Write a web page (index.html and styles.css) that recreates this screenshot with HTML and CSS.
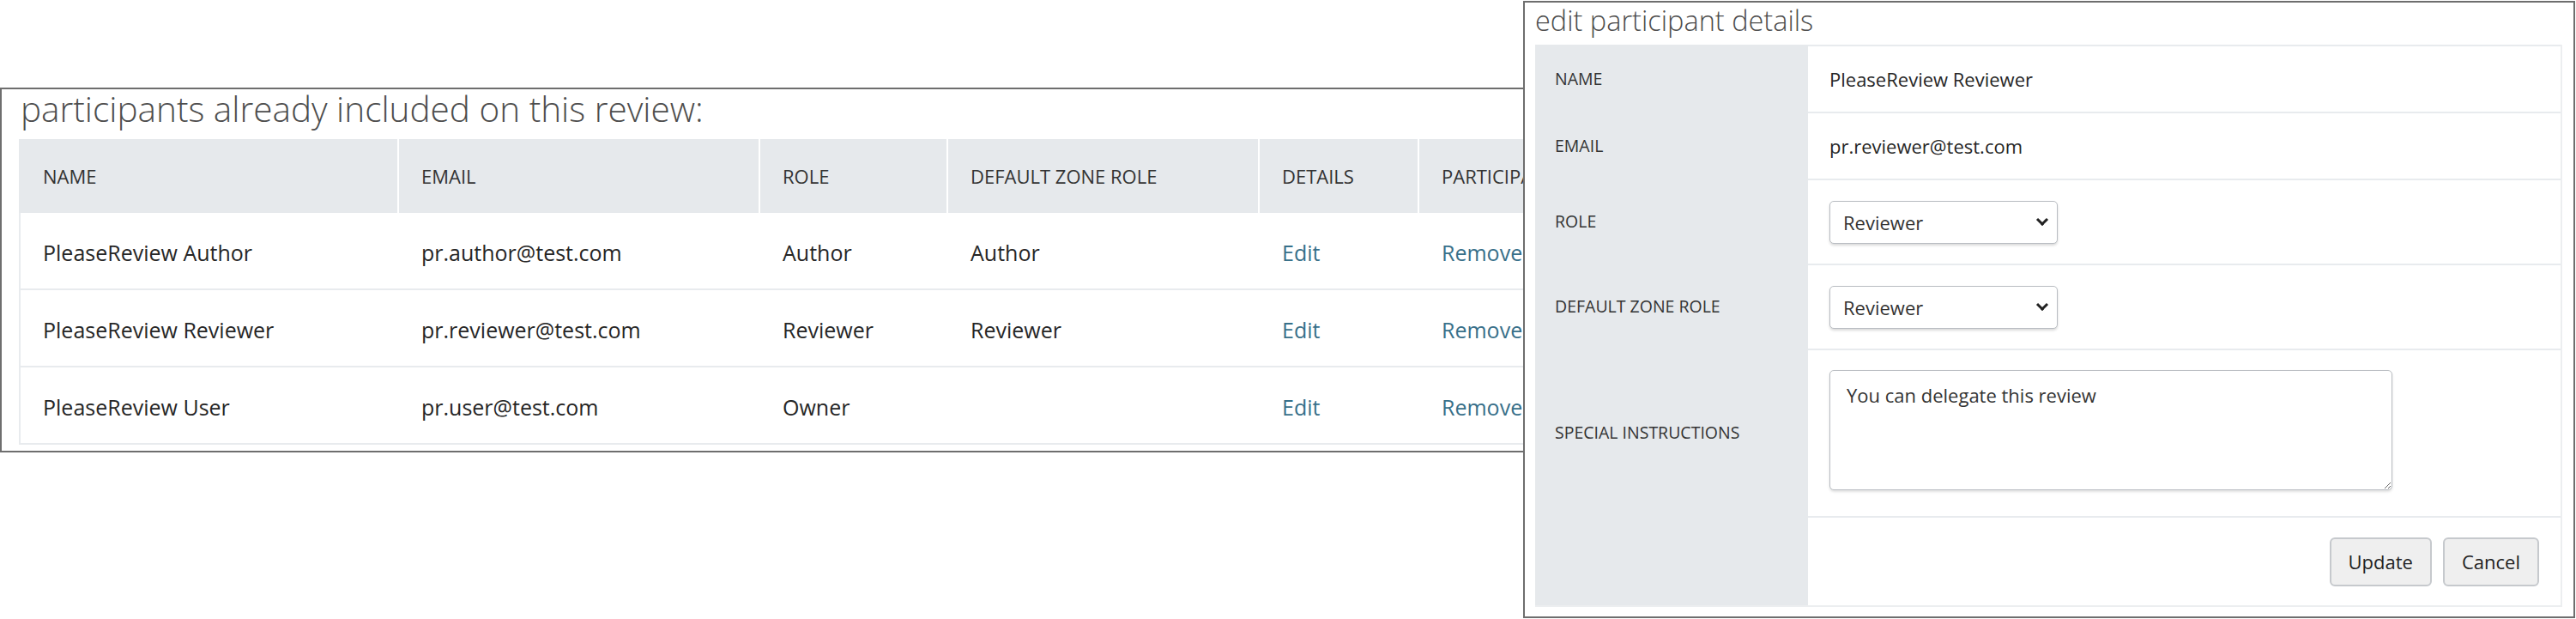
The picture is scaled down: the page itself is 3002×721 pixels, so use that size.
FILE: index.html
```html
<!DOCTYPE html>
<html lang="en">
   <head>
      <meta charset="utf-8">
      <meta name="viewport" content="width=device-width, initial-scale=1">
      <title>Review participants</title>
      <link rel="stylesheet" href="styles.css">
   </head>
   <body>
      <div class="page">
         <section class="panel">
            <h2 class="panel-title">participants already included on this review:</h2>
            <div class="participants">
               <div class="row head">
                  <div class="cell">NAME</div>
                  <div class="cell">EMAIL</div>
                  <div class="cell">ROLE</div>
                  <div class="cell">DEFAULT ZONE ROLE</div>
                  <div class="cell">DETAILS</div>
                  <div class="cell">PARTICIPANT</div>
               </div>
               <div class="row">
                  <div class="cell">PleaseReview Author</div>
                  <div class="cell">pr.author@test.com</div>
                  <div class="cell">Author</div>
                  <div class="cell">Author</div>
                  <div class="cell"><a href="#">Edit</a></div>
                  <div class="cell"><a href="#">Remove</a></div>
               </div>
               <div class="row">
                  <div class="cell">PleaseReview Reviewer</div>
                  <div class="cell">pr.reviewer@test.com</div>
                  <div class="cell">Reviewer</div>
                  <div class="cell">Reviewer</div>
                  <div class="cell"><a href="#">Edit</a></div>
                  <div class="cell"><a href="#">Remove</a></div>
               </div>
               <div class="row">
                  <div class="cell">PleaseReview User</div>
                  <div class="cell">pr.user@test.com</div>
                  <div class="cell">Owner</div>
                  <div class="cell"></div>
                  <div class="cell"><a href="#">Edit</a></div>
                  <div class="cell"><a href="#">Remove</a></div>
               </div>
            </div>
         </section>

         <section class="dialog">
            <h2 class="dialog-title">edit participant details</h2>
            <form class="details">
               <div class="label">NAME</div>
               <div class="value">PleaseReview Reviewer</div>
               <div class="label">EMAIL</div>
               <div class="value">pr.reviewer@test.com</div>
               <label class="label" for="role">ROLE</label>
               <div class="value">
                  <span class="select"><select id="role"><option>Reviewer</option><option>Author</option><option>Owner</option></select></span>
               </div>
               <label class="label" for="zone">DEFAULT ZONE ROLE</label>
               <div class="value">
                  <span class="select"><select id="zone"><option>Reviewer</option><option>Author</option></select></span>
               </div>
               <label class="label" for="notes">SPECIAL INSTRUCTIONS</label>
               <div class="value notes">
                  <textarea id="notes">You can delegate this review</textarea>
               </div>
               <div class="label"></div>
               <div class="value actions">
                  <button type="button">Update</button>
                  <button type="button">Cancel</button>
               </div>
            </form>
         </section>
      </div>
   </body>
</html>
```

FILE: styles.css
```css
body {
   margin: 0;
   background-color: #fff;
   color: #262626;
   font-family: "Open Sans", "Liberation Sans", sans-serif;
}
.page {
   position: relative;
   height: 721px;
   overflow: hidden;
}
a {
   color: #38708a;
   text-decoration: none;
}

/* participants list */
.panel {
   box-sizing: border-box;
   width: 1900px;
   margin-top: 102px;
   padding: 0 0 7px 20px;
   border: 2px solid #6e6e6e;
}
.panel-title {
   margin: 0 0 12px 2px;
   font-size: 40.5px;
   font-weight: 300;
   line-height: 46px;
   color: #4d4d4d;
}
.participants .row {
   display: grid;
   grid-template-columns: 441px 421px 219px 363px 186px 1fr;
   box-sizing: border-box;
   height: 90px;
   border-bottom: 2px solid #e8ebee;
   box-shadow: inset 2px 0 0 #e8ebee;
   font-size: 25px;
}
.participants .head {
   height: 86px;
   border-bottom: 0;
   box-shadow: none;
   font-size: 22px;
   color: #333;
}
.participants .cell {
   display: flex;
   align-items: center;
   padding: 3px 0 0 28px;
   white-space: nowrap;
}
.head .cell {
   padding-top: 0;
   background-color: #e6e9ec;
}
.head .cell + .cell {
   padding-left: 26px;
   border-left: 2px solid #fff;
}

/* edit dialog */
.dialog {
   position: absolute;
   top: 1px;
   left: 1775px;
   box-sizing: border-box;
   width: 1226px;
   height: 719px;
   padding: 1px 13px 0 12px;
   border: 2px solid #6e6e6e;
   background-color: #fff;
}
.dialog-title {
   margin: 0 0 9px;
   font-size: 32.5px;
   font-weight: 300;
   line-height: 39px;
   color: #4d4d4d;
}
.details {
   display: grid;
   grid-template-columns: 318px 1fr;
   grid-template-rows: 78px 78px 99px 99px 195px 104px;
   margin: 0;
   border-right: 2px solid #eceef0;
   border-bottom: 2px solid #eceef0;
   font-size: 22px;
}
.details .label {
   display: flex;
   align-items: center;
   padding-left: 23px;
   background-color: #e6e9ec;
   font-size: 19.5px;
   color: #333;
}
.details .value {
   display: flex;
   align-items: center;
   box-sizing: border-box;
   padding-left: 25px;
   border-top: 2px solid #e8ebee;
}
.details .notes {
   align-items: flex-start;
   padding-top: 23px;
}
.details .actions {
   justify-content: flex-end;
   gap: 13px;
   padding-right: 25px;
}
.select {
   position: relative;
   display: inline-block;
}
.select::after {
   content: "";
   position: absolute;
   top: 17px;
   right: 13px;
   width: 7px;
   height: 7px;
   border-right: 3px solid #222;
   border-bottom: 3px solid #222;
   transform: rotate(45deg);
   pointer-events: none;
}
select {
   appearance: none;
   box-sizing: border-box;
   width: 266px;
   height: 50px;
   margin: 0;
   padding: 0 0 0 15px;
   font: inherit;
   color: #333;
   background-color: #fff;
   border: 1px solid #b9bdc2;
   border-radius: 5px;
   box-shadow: 0 2px 3px rgba(0, 0, 0, 0.15);
}
textarea {
   box-sizing: border-box;
   width: 656px;
   height: 140px;
   margin: 0;
   padding: 13px 19px;
   font: inherit;
   color: #333;
   border: 1px solid #b9bdc2;
   border-radius: 5px;
   box-shadow: 0 2px 3px rgba(0, 0, 0, 0.12);
   resize: both;
}
button {
   height: 57px;
   padding: 0 20px;
   font: inherit;
   color: #222;
   background-color: #efefef;
   border: 2px solid #c6c9cd;
   border-radius: 6px;
}
```
